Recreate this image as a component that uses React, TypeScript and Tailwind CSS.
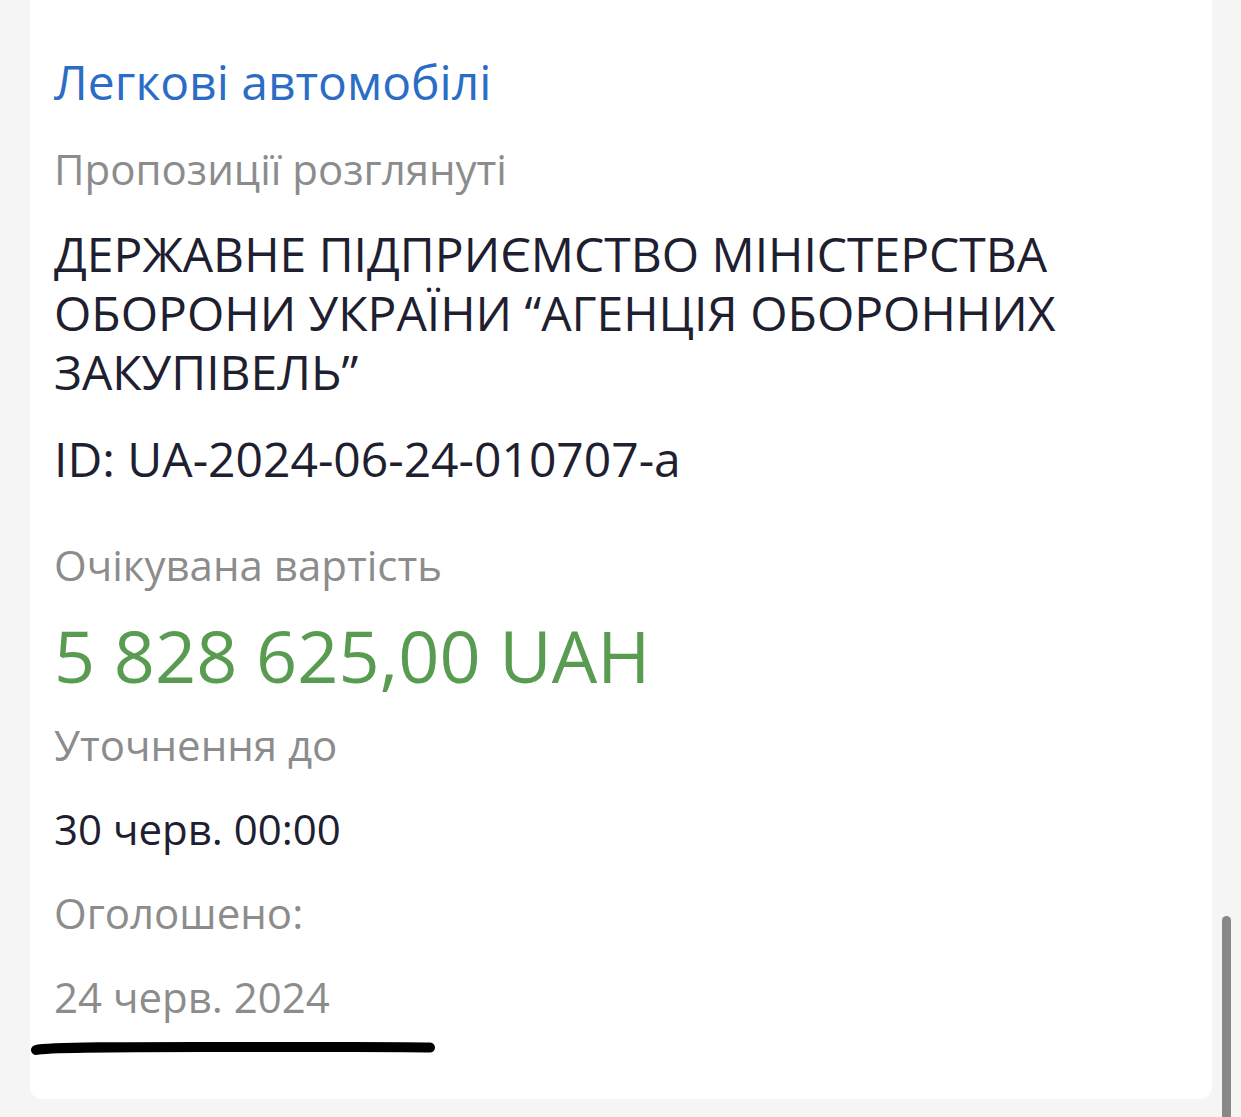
import React from 'react';

const font = { fontFamily: '"Open Sans", "Noto Sans", sans-serif' };

export default function App() {
  return (
    <div className="relative min-h-[1117px] bg-[#f5f5f5] overflow-hidden" style={font}>
      <div className="ml-[30px] w-[1182px] bg-white rounded-b-[12px] pl-6 pt-[52px] pb-[44px]">
        <div className="text-[48px] leading-[59px] text-[#2b6dc5]">Легкові автомобілі</div>
        <div className="mt-[34px] text-[42px] leading-[48px] text-[#8c8c8c]">Пропозиції розглянуті</div>
        <div className="mt-[31px] w-[1040px] text-[48px] leading-[59px] text-[#1e2030]">
          ДЕРЖАВНЕ ПІДПРИЄМСТВО МІНІСТЕРСТВА ОБОРОНИ УКРАЇНИ “АГЕНЦІЯ ОБОРОННИХ ЗАКУПІВЕЛЬ”
        </div>
        <div className="mt-[28px] text-[48px] leading-[59px] text-[#1e2030]">ID: UA-2024-06-24-010707-a</div>
        <div className="mt-[52px] text-[42px] leading-[50px] text-[#8c8c8c]">Очікувана вартість</div>
        <div className="mt-[25px] text-[72px] leading-[80px] text-[#5a9b52]">5 828 625,00 UAH</div>
        <div className="mt-[26px] text-[42px] leading-[48px] text-[#8c8c8c]">Уточнення до</div>
        <div className="mt-[36px] text-[42px] leading-[48px] text-[#1e2030]">30 черв. 00:00</div>
        <div className="mt-[36px] text-[42px] leading-[48px] text-[#8c8c8c]">Оголошено:</div>
        <div className="mt-[36px] text-[42px] leading-[48px] text-[#8c8c8c]">24 черв. 2024</div>
        <svg className="mt-[20px] -ml-6 block" width="410" height="14" viewBox="0 0 410 14">
          <path d="M6 9 C 20 5.5, 120 6, 220 6 S 380 5.5, 400 6.5" stroke="#000" strokeWidth="10" strokeLinecap="round" fill="none" />
        </svg>
      </div>
      <div className="absolute left-[1222px] top-[916px] w-[9px] h-[210px] rounded-full bg-[#888888]" />
    </div>
  );
}
